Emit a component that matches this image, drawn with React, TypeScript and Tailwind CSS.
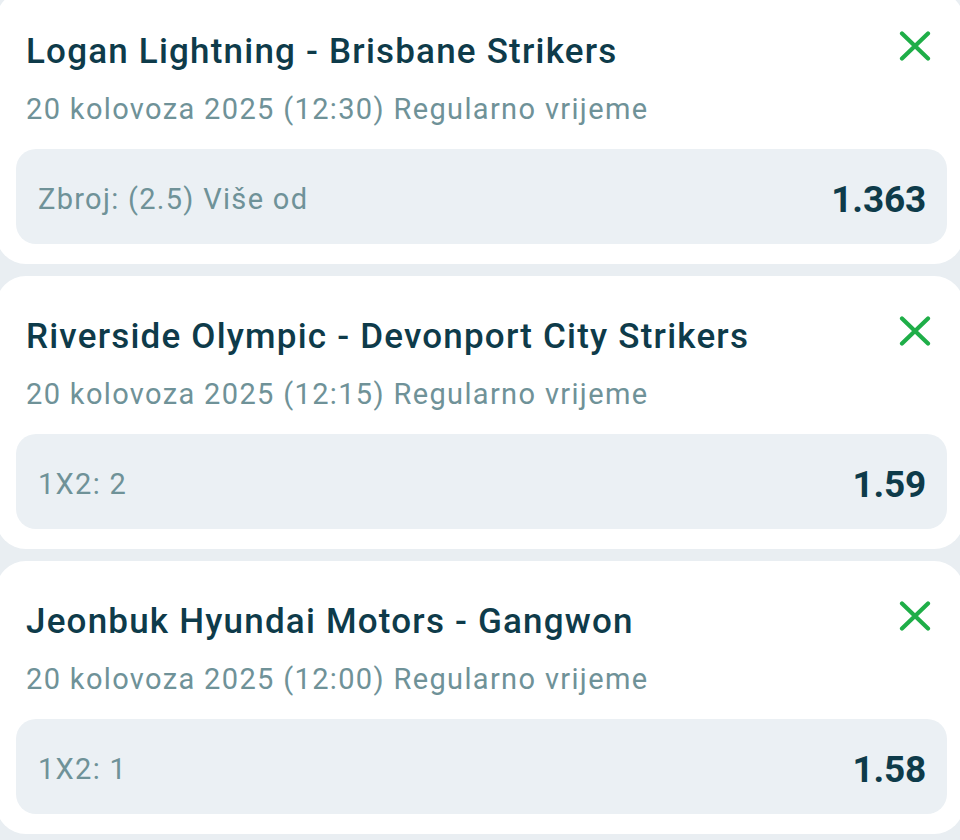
import React from "react";

type Bet = { title: string; date: string; market: string; odds: string };

const bets: Bet[] = [
  {
    title: "Logan Lightning - Brisbane Strikers",
    date: "20 kolovoza 2025 (12:30) Regularno vrijeme",
    market: "Zbroj: (2.5) Više od",
    odds: "1.363",
  },
  {
    title: "Riverside Olympic - Devonport City Strikers",
    date: "20 kolovoza 2025 (12:15) Regularno vrijeme",
    market: "1X2: 2",
    odds: "1.59",
  },
  {
    title: "Jeonbuk Hyundai Motors - Gangwon",
    date: "20 kolovoza 2025 (12:00) Regularno vrijeme",
    market: "1X2: 1",
    odds: "1.58",
  },
];

function XIcon() {
  return (
    <svg width="32" height="30" viewBox="0 0 32 30" fill="none">
      <path
        d="M3 2.5 L29 27.5 M29 2.5 L3 27.5"
        stroke="#1fae48"
        strokeWidth="4.2"
        strokeLinecap="round"
      />
    </svg>
  );
}

function Card({ bet, first }: { bet: Bet; first?: boolean }) {
  return (
    <div
      className={`relative -mx-[4px] bg-white rounded-[30px] pt-[41px] pb-[20px] pl-[20px] pr-[17px] ${
        first ? "-mt-[9px]" : ""
      }`}
    >
      <div className="absolute top-[40px] right-[33px]">
        <XIcon />
      </div>
      <div className="pl-[10px] text-[35px] leading-[40px] font-medium text-[#0e3b4a] tracking-[1.2px]">
        {bet.title}
      </div>
      <div className="pl-[10px] mt-[20px] text-[29px] leading-[34px] text-[#6f9298] tracking-[1.35px]">
        {bet.date}
      </div>
      <div className="mt-[23px] h-[95px] rounded-[20px] bg-[#ebf0f4] flex items-center justify-between pt-[6px] pl-[22px] pr-[21px]">
        <span className="text-[29px] text-[#6f9298] tracking-[1.3px]">{bet.market}</span>
        <span className="text-[37px] font-bold text-[#0e3b4a] tracking-[-0.2px]">{bet.odds}</span>
      </div>
    </div>
  );
}

export default function App() {
  return (
    <div
      className="w-[960px] h-[840px] overflow-hidden bg-[#e9eef2] flex flex-col gap-[12px]"
      style={{ fontFamily: "Roboto, 'Noto Sans', sans-serif" }}
    >
      {bets.map((b, i) => (
        <Card key={i} bet={b} first={i === 0} />
      ))}
    </div>
  );
}
